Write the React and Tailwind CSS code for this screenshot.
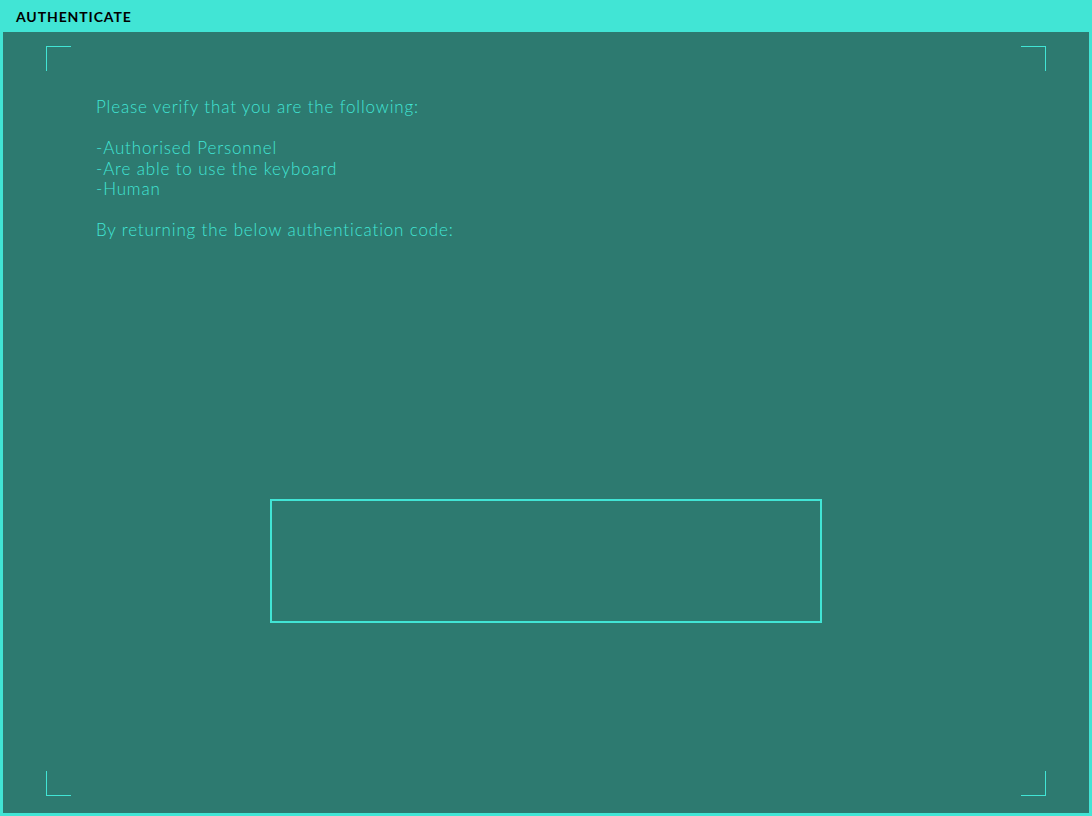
export default function App() {
  return (
    <div className="h-[816px] w-[1092px] bg-[#41e5d5] flex flex-col" style={{ fontFamily: "Lato, 'Noto Sans', sans-serif" }}>
      <div className="h-[32px] flex items-center pl-[16px] shrink-0">
        <span className="text-[14px] font-bold text-black tracking-[0.9px]">AUTHENTICATE</span>
      </div>
      <div className="relative flex-1 mx-[3px] mb-[3px] bg-[#2d7a70] flex flex-col">
        <div className="absolute left-[43px] top-[14px] w-[25px] h-[25px] border-l border-t border-[#41e5d5]" />
        <div className="absolute right-[43px] top-[14px] w-[25px] h-[25px] border-r border-t border-[#41e5d5]" />
        <div className="absolute left-[43px] bottom-[17px] w-[25px] h-[25px] border-l border-b border-[#41e5d5]" />
        <div className="absolute right-[43px] bottom-[17px] w-[25px] h-[25px] border-r border-b border-[#41e5d5]" />
        <div className="pl-[93px] pt-[65px] text-[17px] leading-[20.5px] text-[#41e5d5] font-light tracking-[0.85px]">
          <p>Please verify that you are the following:</p>
          <p className="mt-[20.5px]">-Authorised Personnel</p>
          <p>-Are able to use the keyboard</p>
          <p>-Human</p>
          <p className="mt-[20.5px]">By returning the below authentication code:</p>
        </div>
        <div className="mx-auto mt-[258px] w-[552px] h-[124px] border-2 border-[#41e5d5]" />
      </div>
    </div>
  );
}
